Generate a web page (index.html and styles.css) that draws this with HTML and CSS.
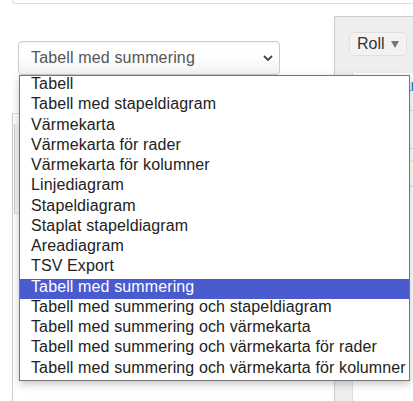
FILE: index.html
```html
<!DOCTYPE html>
<html lang="sv">
<head>
  <meta charset="UTF-8" />
  <meta name="viewport" content="width=device-width, initial-scale=1.0" />
  <title>Pivottabell</title>
  <link rel="stylesheet" href="styles.css">
</head>
<body>
  <div class="top-box"></div>

  <div class="main">
    <div class="left">
      <div class="select">
        <span>Tabell med summering</span>
        <svg class="chevron" width="10" height="6" viewBox="0 0 10 6">
          <path d="M1 1 L5 5 L9 1" fill="none" stroke="#444" stroke-width="1.8" />
        </svg>
      </div>
      <div class="table">
        <div class="table-head"></div>
        <div class="table-row"></div>
      </div>
    </div>

    <div class="right">
      <button class="attr">Roll
        <svg class="arrow" width="8" height="7" viewBox="0 0 8 7"><path d="M0 0 H8 L4 7 Z" fill="#777" /></svg>
      </button>
      <div class="attr-box">
        <div class="attr-row"><a href="#">Värde</a></div>
        <div class="attr-row"></div>
        <div class="attr-row sort"><span class="sort-arrow">▼</span></div>
      </div>
    </div>
  </div>

  <div class="dropdown">
    <div class="option">Tabell</div>
    <div class="option">Tabell med stapeldiagram</div>
    <div class="option">Värmekarta</div>
    <div class="option">Värmekarta för rader</div>
    <div class="option">Värmekarta för kolumner</div>
    <div class="option">Linjediagram</div>
    <div class="option">Stapeldiagram</div>
    <div class="option">Staplat stapeldiagram</div>
    <div class="option">Areadiagram</div>
    <div class="option">TSV Export</div>
    <div class="option selected">Tabell med summering</div>
    <div class="option">Tabell med summering och stapeldiagram</div>
    <div class="option">Tabell med summering och värmekarta</div>
    <div class="option">Tabell med summering och värmekarta för rader</div>
    <div class="option">Tabell med summering och värmekarta för kolumner</div>
  </div>
</body>
</html>
```

FILE: styles.css
```css
* {
  box-sizing: border-box;
  margin: 0;
  padding: 0;
}

body {
  font-family: 'Liberation Sans', Arial, sans-serif;
  font-size: 16px;
  color: #333;
  background: #fff;
  overflow: hidden;
  height: 401px;
}

.top-box {
  height: 4px;
  margin-left: 12px;
  border: 1px solid #ddd;
  border-top: none;
  border-right: none;
  border-bottom-left-radius: 4px;
}

.main {
  display: flex;
  margin-top: 12px;
  height: 400px;
}

.left {
  flex: 0 0 334px;
  padding-top: 25px;
}

.select {
  display: flex;
  align-items: center;
  justify-content: space-between;
  width: 262px;
  height: 34px;
  margin-left: 18px;
  padding: 0 6px 0 12px;
  border: 1px solid #ccc;
  border-radius: 4px;
  background: linear-gradient(#fff 40%, #f2f2f2);
  color: #555;
  letter-spacing: 0.15px;
  box-shadow: inset 0 1px 1px rgba(0, 0, 0, 0.05);
}

.table {
  margin: 38px 0 0 12px;
  height: 300px;
  border-left: 1px solid #ccc;
  border-top: 1px solid #ddd;
}

.table-head {
  height: 10px;
}

.table-row {
  height: 90px;
  margin-left: 1px;
  background: #f4f4f4;
  border-left: 1px solid #ccc;
  border-bottom: 1px solid #ddd;
}

.right {
  flex: 1;
  min-width: 0;
  overflow: hidden;
  background: #eee;
  border-left: 1px solid #ccc;
  border-top: 1px solid #ccc;
  padding: 15px 0 0 14px;
}

.attr {
  display: flex;
  align-items: center;
  gap: 6px;
  font-family: inherit;
  font-size: 16px;
  color: #333;
  height: 24px;
  padding: 0 7px 0 7px;
  background: #f2f2f2;
  border: 1px solid #e0e0e0;
  border-radius: 5px;
  white-space: nowrap;
}

.arrow {
  margin-top: 1px;
}

.attr-box {
  margin: 17px 0 0 3px;
  height: 330px;
  background: #fff;
  border-left: 1px solid #ddd;
}

.attr-row {
  height: 38px;
  border-bottom: 1px solid #ddd;
  padding: 4px 0 0 38px;
  white-space: nowrap;
}

.attr-row a {
  color: #337ab7;
  text-decoration: none;
}

.sort {
  padding: 4px 0 0 57px;
}

.sort-arrow {
  color: #8a6d3b;
  font-size: 12px;
}

.dropdown {
  position: absolute;
  left: 19px;
  top: 75px;
  width: 391px;
  border: 1px solid #767676;
  background: #fff;
  box-shadow: 0 3px 8px rgba(0, 0, 0, 0.22);
  color: #222;
}

.option {
  height: 20.25px;
  line-height: 16px;
  padding-left: 11px;
  white-space: nowrap;
  letter-spacing: 0.12px;
}

.option.selected {
  background: #4a5bd0;
  color: #fff;
}
```
